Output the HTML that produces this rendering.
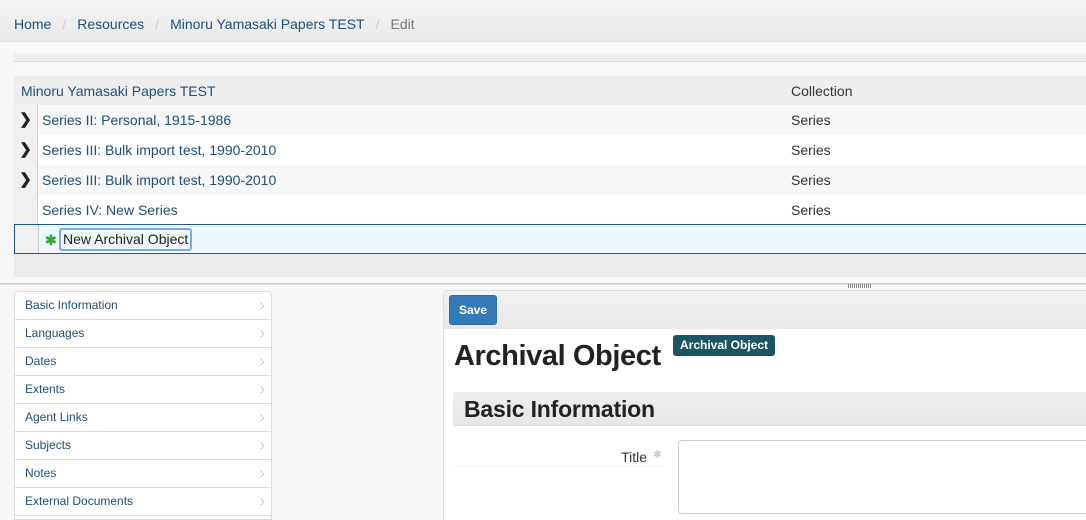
<!DOCTYPE html>
<html><head><style>
*{margin:0;padding:0;box-sizing:border-box}
html,body{width:1086px;height:520px;overflow:hidden}
body{background:#f7f7f7;font-family:"Liberation Sans",sans-serif;position:relative}
.a{position:absolute}
.bc{left:0;top:0;width:1086px;height:42px;background:linear-gradient(#f4f4f4,#e9e9e9);border-bottom:1px solid #ddd;font-size:14px;line-height:48px;color:#1f4e79;padding-left:14px}
.bc span{color:#ccc;margin:0 11px}
.bc .e{color:#777}
.row{left:14px;width:1072px;height:30px;font-size:14px;line-height:30px;color:#1f4e79}
.row .c{position:absolute;left:0;top:0;width:24px;height:100%;border-right:1px solid #ccc}
.row .t{position:absolute;left:28px}
.row .y{position:absolute;left:777px;color:#333}
.side{left:14px;top:291px;width:258px;height:229px;overflow:hidden;background:#fff;border:1px solid #ddd;border-radius:4px 4px 0 0}
.side div{height:28px;border-bottom:1px solid #ddd;font-size:12px;line-height:27px;padding-left:10px;color:#1f4e79;position:relative}
.side div:after{content:"›";position:absolute;right:6px;top:0;color:#ccc;font-size:16px}
</style></head><body>
<div class="a bc">Home<span>/</span>Resources<span>/</span>Minoru Yamasaki Papers TEST<span>/</span><b class="e" style="font-weight:normal">Edit</b></div>
<div class="a" style="left:14px;top:53px;width:1072px;height:9px;background:#efefef;border-bottom:1px solid #ddd"></div>
<div class="a" style="left:14px;top:63px;width:1072px;height:13px;background:#f9f9f9"></div>
<div class="a row" style="top:76px;height:29px;line-height:30px;background:#eeeeee"><span style="position:absolute;left:7px">Minoru Yamasaki Papers TEST</span><span class="y">Collection</span></div>
<div class="a row" style="top:105px;background:#f8f8f8"><div class="c" style="background:#f0f0f0;font-weight:bold;color:#222;text-align:center;font-size:15px">&#10095;</div><span class="t">Series II: Personal, 1915-1986</span><span class="y">Series</span></div>
<div class="a row" style="top:135px;background:#fff"><div class="c" style="background:#f0f0f0;font-weight:bold;color:#222;text-align:center;font-size:15px">&#10095;</div><span class="t">Series III: Bulk import test, 1990-2010</span><span class="y">Series</span></div>
<div class="a row" style="top:165px;background:#f8f8f8"><div class="c" style="background:#f0f0f0;font-weight:bold;color:#222;text-align:center;font-size:15px">&#10095;</div><span class="t">Series III: Bulk import test, 1990-2010</span><span class="y">Series</span></div>
<div class="a row" style="top:195px;background:#fff"><div class="c" style="background:#f0f0f0"></div><span class="t">Series IV: New Series</span><span class="y">Series</span></div>
<div class="a row" style="top:224px;height:30px;background:#eef7fd;border:1px solid #1f5a8a;border-right:none"><div class="c" style="background:#f0f0f0;top:0"></div><span style="position:absolute;left:30px;top:0;color:#3a3;font-size:14px;font-weight:bold">✱</span><span style="position:absolute;left:44px;top:3px;height:23px;line-height:19px;border:2px solid #7fa8ea;border-radius:3px;padding:0 2px;color:#222">New Archival Object</span></div>
<div class="a" style="left:14px;top:254px;width:1072px;height:23px;background:#ebebeb"></div>
<div class="a" style="left:0;top:283px;width:1086px;height:2px;border-top:1px solid #ccc;border-bottom:1px solid #ddd"></div>
<div class="a" style="left:848px;top:284px;width:23px;height:4px;background:repeating-linear-gradient(90deg,#888 0 1px,transparent 1px 2px)"></div>
<div class="a side"><div>Basic Information</div><div>Languages</div><div>Dates</div><div>Extents</div><div>Agent Links</div><div>Subjects</div><div>Notes</div><div>External Documents</div><div></div></div>
<div class="a" style="left:443px;top:290px;width:643px;height:230px;background:#fff;border-left:1px solid #ddd;border-top:1px solid #ddd;border-radius:4px 0 0 0"></div>
<div class="a" style="left:444px;top:291px;width:642px;height:38px;background:linear-gradient(#f2f2f2,#e8e8e8)"></div>
<div class="a" style="left:449px;top:295px;width:48px;height:30px;background:#337ab7;border:1px solid #2e6da4;border-radius:3px;color:#fff;font-size:12px;font-weight:bold;line-height:28px;text-align:center">Save</div>
<div class="a" style="left:454px;top:338px;font-size:29px;color:#222;line-height:36px;font-weight:bold;letter-spacing:-0.4px">Archival Object</div>
<div class="a" style="left:673px;top:335px;width:102px;height:21px;background:#1c5566;border-radius:3px;color:#fff;font-size:12px;font-weight:bold;line-height:20px;text-align:center">Archival Object</div>
<div class="a" style="left:453px;top:392px;width:633px;height:34px;background:linear-gradient(#eeeeee,#e6e6e6);border-bottom:1px solid #ddd;font-size:23px;line-height:34px;padding-left:11px;color:#222;font-weight:bold;letter-spacing:-0.2px">Basic Information</div>
<div class="a" style="left:454px;top:447px;width:209px;height:20px;border-bottom:1px dotted #ddd;font-size:14px;color:#333;text-align:right;padding-right:16px;line-height:20px">Title <span style="position:absolute;right:1px;top:-2px;color:#ccc;font-size:11px">✱</span></div>
<div class="a" style="left:678px;top:440px;width:420px;height:74px;background:#fff;border:1px solid #ccc;border-radius:4px"></div>
</body></html>
